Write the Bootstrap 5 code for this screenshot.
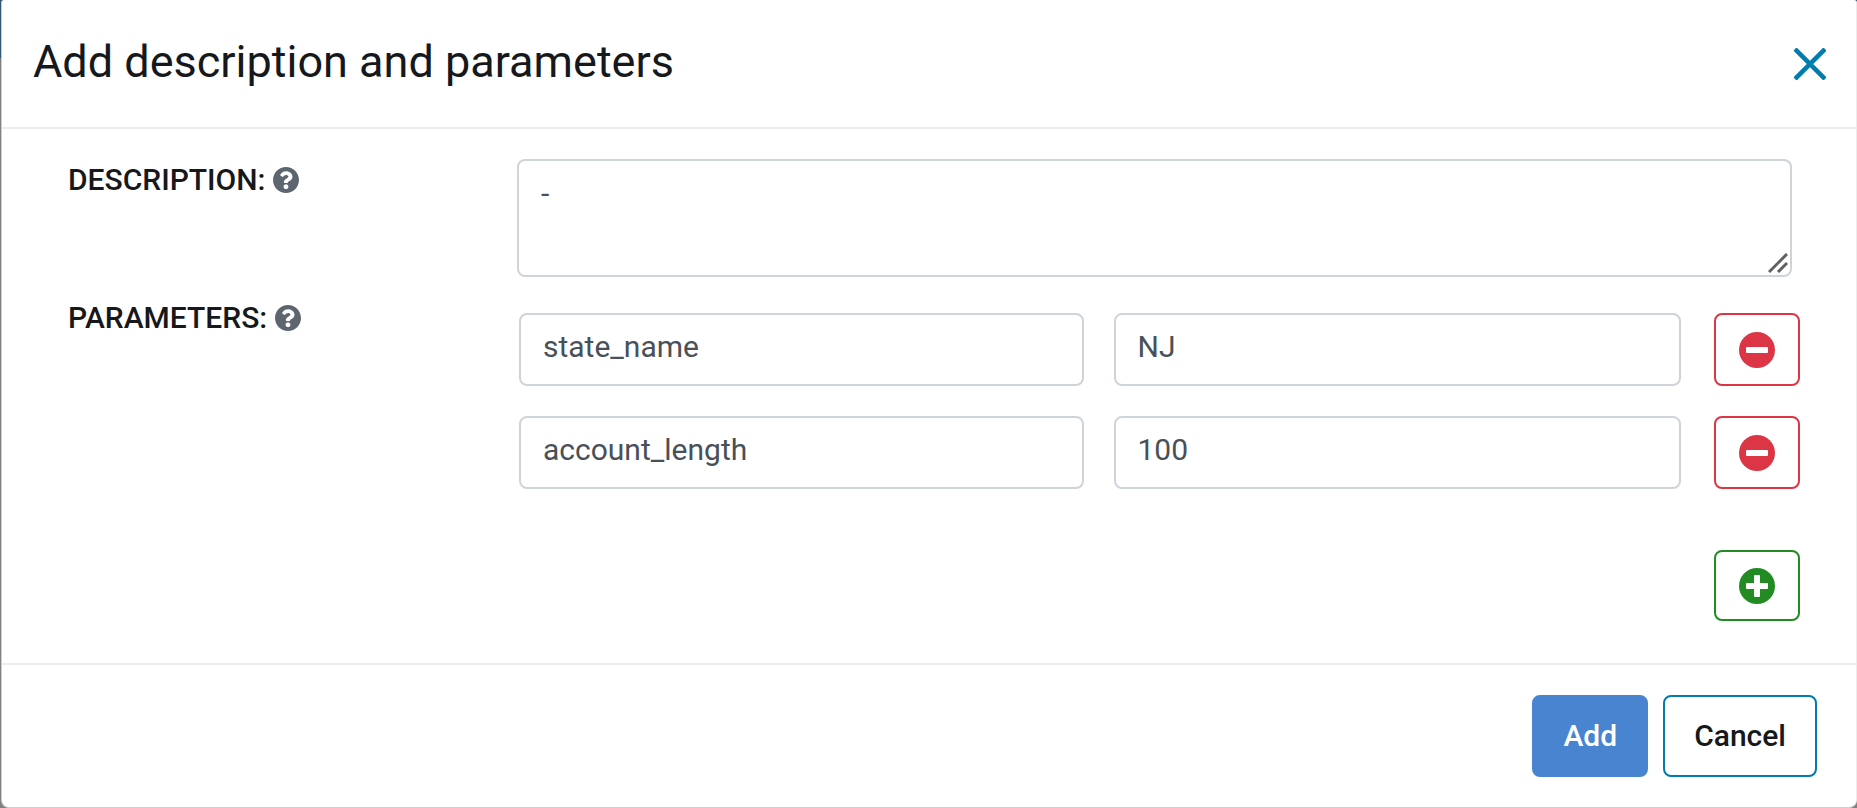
<!DOCTYPE html>
<html lang="en">
<head>
<meta charset="utf-8">
<meta name="viewport" content="width=device-width, initial-scale=1">
<title>Add description and parameters</title>
<link href="https://cdn.jsdelivr.net/npm/bootstrap@5.3.0/dist/css/bootstrap.min.css" rel="stylesheet">
<style>
  body { font-family: Roboto, "Liberation Sans", sans-serif; font-size: 30px; line-height: 44px; color: #16181b; background: linear-gradient(#2f5878 58px, #808080 58px); }
  .dialog-panel { min-height: 100vh; margin-left: 1px; border: solid #cfcfcf; border-width: 0 1px 1px; border-right-color: #ececec; border-radius: 3px 3px 8px 8px; }
  .dialog-head { padding: 30px 30px 33px 31px; border-bottom: 2px solid #e9ecef; }
  .dialog-title { font-size: 45px; line-height: 64px; font-weight: 400; }
  .dialog-close { line-height: 0; color: #007cb0; padding: 4px 0 0; }
  .dialog-body { padding: 30px 56px 42px 66px; }
  .label-col { width: 449px; font-weight: 500; display: flex; align-items: center; gap: 8px; height: 42px; }
  .help-icon { color: #5d666f; }
  .field { font-size: 30px; line-height: 44px; color: #495057; border: 2px solid #ced4da; border-radius: 8px; padding: 10px 22px 15px; }
  .desc-wrap { margin-right: 8px; }
  .desc-box { height: 118px; resize: none; padding-top: 11px; }
  .grip { position: absolute; right: 4px; bottom: 4px; pointer-events: none; }
  .param-row { margin-top: 20px; }
  .param-grid { display: grid; grid-template-columns: 565fr 568fr 89px; gap: 30px; padding: 16px 0 0 2px; }
  .icon-btn { border-width: 2px; border-radius: 8px; padding: 0; width: 86px; line-height: 0; justify-self: end; }
  .add-row { height: 71px; margin-top: 61px; --bs-btn-color: #228b22; --bs-btn-border-color: #228b22; --bs-btn-hover-bg: #228b22; }
  .dialog-foot { padding: 30px 39px; border-top: 2px solid #e9ecef; gap: 15px; }
  .foot-btn { font-size: 30px; line-height: 44px; font-weight: 500; border-width: 2px; border-radius: 8px; padding: 17px 29px; }
  .btn-add { --bs-btn-color: #fff; --bs-btn-bg: #4984d1; --bs-btn-border-color: #4984d1; }
  .btn-cancel { --bs-btn-color: #16181b; --bs-btn-border-color: #007cb0; }
</style>
</head>
<body>
<svg class="d-none" xmlns="http://www.w3.org/2000/svg">
  <symbol id="help" viewBox="8 8 496 496"><path fill="currentColor" d="M504 256c0 136.997-111.043 248-248 248S8 392.997 8 256C8 119.083 119.043 8 256 8s248 111.083 248 248zM262.655 90c-54.497 0-89.255 22.957-116.549 63.758-3.536 5.286-2.353 12.415 2.715 16.258l34.699 26.31c5.205 3.947 12.621 3.008 16.665-2.122 17.864-22.658 30.113-35.797 57.303-35.797 20.429 0 45.698 13.148 45.698 32.958 0 14.976-12.363 22.667-32.534 33.976C247.128 238.528 216 254.941 216 296v4c0 6.627 5.373 12 12 12h56c6.627 0 12-5.373 12-12v-1.333c0-28.462 83.186-29.647 83.186-106.667 0-58.002-60.165-102-116.531-102zM256 338c-25.365 0-46 20.635-46 46 0 25.364 20.635 46 46 46s46-20.636 46-46c0-25.365-20.635-46-46-46z"/></symbol>
  <symbol id="minus" viewBox="0 0 36 36"><circle cx="18" cy="18" r="18" fill="currentColor"/><rect x="7" y="15" width="22" height="6" rx="1" fill="#fff"/></symbol>
  <symbol id="plus" viewBox="0 0 36 36"><circle cx="18" cy="18" r="18" fill="currentColor"/><rect x="7" y="15" width="22" height="6" rx="1" fill="#fff"/><rect x="15" y="7" width="6" height="22" rx="1" fill="#fff"/></symbol>
</svg>
<main class="dialog-panel bg-white d-flex flex-column">
  <header class="dialog-head d-flex justify-content-between align-items-center">
    <h1 class="dialog-title m-0">Add description and parameters</h1>
    <button type="button" class="dialog-close border-0 bg-transparent" aria-label="Close">
      <svg width="32" height="32" viewBox="0 0 32 32" fill="none" stroke="currentColor" stroke-width="4.5"><path d="M1 1 31 31M31 1 1 31"/></svg>
    </button>
  </header>
  <form class="d-flex flex-column flex-grow-1">
    <div class="dialog-body flex-grow-1">
      <div class="d-flex">
        <div class="label-col flex-shrink-0"><label for="desc">DESCRIPTION:</label><svg class="help-icon" width="26" height="26"><use href="#help"/></svg></div>
        <div class="position-relative flex-grow-1 desc-wrap">
          <textarea id="desc" class="form-control field desc-box">-</textarea>
          <svg class="grip" width="20" height="20" viewBox="0 0 20 20" fill="none" stroke="#606060" stroke-width="3"><path d="M1 19 19 1M10 19 19 10"/></svg>
        </div>
      </div>
      <div class="param-row d-flex">
        <div class="label-col flex-shrink-0"><label for="key1">PARAMETERS:</label><svg class="help-icon" width="26" height="26"><use href="#help"/></svg></div>
        <div class="param-grid flex-grow-1">
          <input id="key1" class="form-control field" value="state_name">
          <input class="form-control field" value="NJ" aria-label="Parameter 1 value">
          <button type="button" class="btn btn-outline-danger icon-btn" aria-label="Remove parameter 1"><svg width="36" height="36"><use href="#minus"/></svg></button>
          <input class="form-control field" value="account_length" aria-label="Parameter 2 name">
          <input class="form-control field" value="100" aria-label="Parameter 2 value">
          <button type="button" class="btn btn-outline-danger icon-btn" aria-label="Remove parameter 2"><svg width="36" height="36"><use href="#minus"/></svg></button>
        </div>
      </div>
      <div class="d-flex justify-content-end">
        <button type="button" class="btn icon-btn add-row" aria-label="Add parameter"><svg width="36" height="36"><use href="#plus"/></svg></button>
      </div>
    </div>
    <footer class="dialog-foot d-flex justify-content-end">
      <button type="submit" class="btn foot-btn btn-add">Add</button>
      <button type="button" class="btn foot-btn btn-cancel">Cancel</button>
    </footer>
  </form>
</main>
<script src="https://cdn.jsdelivr.net/npm/bootstrap@5.3.0/dist/js/bootstrap.bundle.min.js"></script>
</body>
</html>
